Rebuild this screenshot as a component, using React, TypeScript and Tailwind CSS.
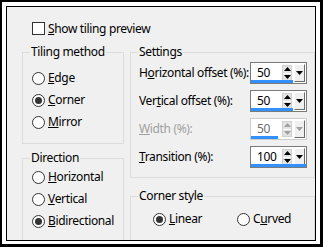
import React from "react";

function Radio({ checked, label }: { checked?: boolean; label: React.ReactNode }) {
  return (
    <div className="flex items-center h-[22px]">
      <span className="w-[13px] h-[13px] rounded-full border border-[#333333] bg-white flex items-center justify-center shrink-0">
        {checked && <span className="w-[7px] h-[7px] rounded-full bg-[#333333]" />}
      </span>
      <span className="ml-[3px]">{label}</span>
    </div>
  );
}

function Spinner({ value, bar, disabled }: { value: string; bar: number; disabled?: boolean }) {
  const c = disabled ? "#a0a0a0" : "#000";
  return (
    <div
      className={
        "relative w-[57px] h-[22px] border bg-white flex items-center " +
        (disabled ? "border-[#cccccc]" : "border-[#7a7a7a]")
      }
    >
      <span className={"ml-[6px] flex-1 " + (disabled ? "text-[#6d6d6d]" : "text-black")}>{value}</span>
      <div className="flex flex-col w-[10px] h-[16px] mr-[2px] bg-[#e3e3e3] border border-[#d0d0d0]">
        <div className="flex-1 flex items-center justify-center">
          <svg width="7" height="4" viewBox="0 0 7 4">
            <path d="M0 4 L3.5 0 L7 4 Z" fill={c} />
          </svg>
        </div>
        <div className="h-px bg-white" />
        <div className="flex-1 flex items-center justify-center">
          <svg width="7" height="4" viewBox="0 0 7 4">
            <path d="M0 0 L7 0 L3.5 4 Z" fill={c} />
          </svg>
        </div>
      </div>
      <div className="w-[11px] h-[18px] mr-[1px] bg-[#f0f0f0] border-l border-t border-l-white border-t-white border-r border-b border-r-[#696969] border-b-[#696969] flex items-center justify-center">
        <svg width="7" height="4" viewBox="0 0 7 4">
          <path d="M0 0 L7 0 L3.5 4 Z" fill={c} />
        </svg>
      </div>
      <div className="absolute left-0 bottom-0 h-[3px] bg-[#3391ff]" style={{ width: bar }} />
    </div>
  );
}

function Row({ label, children, disabled }: { label: React.ReactNode; children: React.ReactNode; disabled?: boolean }) {
  return (
    <div className="flex items-center justify-between h-[28px]">
      <span className={"whitespace-nowrap " + (disabled ? "text-[#a0a0a0]" : "")}>{label}</span>
      {children}
    </div>
  );
}

export default function App() {
  return (
    <div className="w-[323px] h-[247px] bg-white border-black border-l-2 border-t-2 border-r-[3px] border-b-[3px] pl-[4px] pt-[4px] pr-[4px] pb-[3px] font-['Noto_Sans',sans-serif] text-[12px] leading-[16px] tracking-[-0.35px] text-black">
      <div className="w-full h-full border border-black bg-[#f0f0f0] overflow-hidden flex flex-col">
        <div className="flex items-center ml-[25px] mt-[15px] h-[13px]">
          <span className="w-[13px] h-[13px] border border-[#333333] bg-white" />
          <span className="ml-[3px]">
            <u>S</u>how tiling preview
          </span>
        </div>
        <div className="flex mt-[9px]">
          <div className="flex flex-col ml-[15px] w-[102px]">
            <fieldset className="border border-[#dcdcdc] h-[100px]">
              <legend className="ml-[7px] px-[1px]">Tiling method</legend>
              <div className="flex flex-col mt-[7px] pl-[9px]">
                <Radio label={<><u>E</u>dge</>} />
                <Radio checked label={<><u>C</u>orner</>} />
                <Radio label={<><u>M</u>irror</>} />
              </div>
            </fieldset>
            <fieldset className="border border-[#dcdcdc] h-[110px] mt-[6px]">
              <legend className="ml-[7px] px-[1px]">Direction</legend>
              <div className="flex flex-col mt-[0px] pl-[9px]">
                <Radio label={<><u>H</u>orizontal</>} />
                <Radio label={<><u>V</u>ertical</>} />
                <Radio checked label={<><u>B</u>idirectional</>} />
              </div>
            </fieldset>
          </div>
          <div className="flex flex-col ml-[6px] w-[185px]">
            <fieldset className="border border-[#dcdcdc] h-[134px]">
              <legend className="ml-[7px] px-[1px]">Settings</legend>
              <div className="flex flex-col mt-[-1px] pl-[8px] pr-[7px]">
                <Row label={<>H<u>o</u>rizontal offset (%):</>}>
                  <Spinner value="50" bar={42} />
                </Row>
                <Row label={<>Ver<u>t</u>ical offset (%):</>}>
                  <Spinner value="50" bar={42} />
                </Row>
                <Row disabled label={<><u>W</u>idth (%):</>}>
                  <Spinner value="50" bar={27} disabled />
                </Row>
                <Row label={<><u>T</u>ransition (%):</>}>
                  <Spinner value="100" bar={55} />
                </Row>
              </div>
            </fieldset>
            <fieldset className="border border-[#dcdcdc] h-[80px] mt-[10px]">
              <legend className="ml-[7px] px-[1px]">Corner style</legend>
              <div className="flex mt-[4px] pl-[22px]">
                <div className="w-[84px]">
                  <Radio checked label={<><u>L</u>inear</>} />
                </div>
                <Radio label={<>C<u>u</u>rved</>} />
              </div>
            </fieldset>
          </div>
        </div>
      </div>
    </div>
  );
}
